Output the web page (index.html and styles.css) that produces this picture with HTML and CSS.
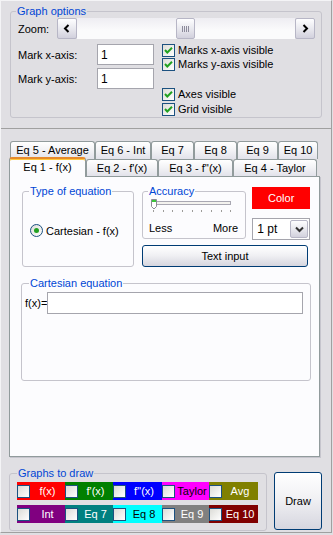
FILE: index.html
```html
<!DOCTYPE html>
<html lang="en">
<head>
    <meta charset="UTF-8">
    <title>Graph options</title>
    <link rel="stylesheet" href="styles.css">
</head>
<body>

<div class="app">
    <!-- Graph options panel -->
    <div class="top">
        <fieldset class="group options">
            <legend>Graph options</legend>
            <div class="zoom-row">
                <span class="zoom-label">Zoom:</span>
                <div class="hscroll">
                    <span class="sb-btn"><svg width="8" height="9" viewBox="0 0 8 9"><path d="M5.5 1L2 4.5 5.5 8" fill="none" stroke="#000" stroke-width="2"/></svg></span>
                    <span class="sb-track">
                        <span class="sb-thumb"><svg width="8" height="6" viewBox="0 0 8 6"><path d="M.5 0v6M2.5 0v6M4.5 0v6M6.5 0v6" stroke="#8d8c9c" stroke-width="1"/></svg></span>
                    </span>
                    <span class="sb-btn"><svg width="8" height="9" viewBox="0 0 8 9"><path d="M2.5 1L6 4.5 2.5 8" fill="none" stroke="#000" stroke-width="2"/></svg></span>
                </div>
            </div>
            <div class="opts">
                <div class="marks">
                    <label class="field"><span class="field-label">Mark x-axis:</span><input class="textbox" type="text" value="1"></label>
                    <label class="field"><span class="field-label">Mark y-axis:</span><input class="textbox" type="text" value="1"></label>
                </div>
                <div class="checks">
                    <div class="check"><span class="box"><svg width="11" height="11" viewBox="0 0 11 11"><path d="M2 5l2.3 2.5L9 2.8" fill="none" stroke="#21a121" stroke-width="2"/></svg></span>Marks x-axis visible</div>
                    <div class="check"><span class="box"><svg width="11" height="11" viewBox="0 0 11 11"><path d="M2 5l2.3 2.5L9 2.8" fill="none" stroke="#21a121" stroke-width="2"/></svg></span>Marks y-axis visible</div>
                    <div class="check spaced"><span class="box"><svg width="11" height="11" viewBox="0 0 11 11"><path d="M2 5l2.3 2.5L9 2.8" fill="none" stroke="#21a121" stroke-width="2"/></svg></span>Axes visible</div>
                    <div class="check tight"><span class="box"><svg width="11" height="11" viewBox="0 0 11 11"><path d="M2 5l2.3 2.5L9 2.8" fill="none" stroke="#21a121" stroke-width="2"/></svg></span>Grid visible</div>
                </div>
            </div>
        </fieldset>
    </div>

    <!-- Equations and graphs -->
    <div class="bottom">
        <div class="tabs">
            <div class="tab-row back">
                <span class="tab" style="width:85px">Eq 5 - Average</span>
                <span class="tab" style="width:56px">Eq 6 - Int</span>
                <span class="tab" style="width:43px">Eq 7</span>
                <span class="tab" style="width:43px">Eq 8</span>
                <span class="tab" style="width:41px">Eq 9</span>
                <span class="tab" style="width:40px">Eq 10</span>
            </div>
            <div class="tab-row front">
                <span class="tab active" style="width:77px">Eq 1 - f(x)</span>
                <span class="tab" style="width:72px">Eq 2 - f'(x)</span>
                <span class="tab" style="width:75px">Eq 3 - f''(x)</span>
                <span class="tab" style="width:84px">Eq 4 - Taylor</span>
            </div>
            <div class="pane">
                <div class="eq-top">
                    <fieldset class="group type-group">
                        <legend>Type of equation</legend>
                        <div class="radio">
                            <svg width="13" height="13" viewBox="0 0 13 13">
                                <defs><linearGradient id="rg" x1="0" y1="0" x2="1" y2="1"><stop offset="0" stop-color="#dcdcd7"/><stop offset="1" stop-color="#fff"/></linearGradient></defs>
                                <circle cx="6.5" cy="6.5" r="6" fill="url(#rg)" stroke="#1c5180"/>
                                <circle cx="6.5" cy="6.5" r="2.5" fill="#21a121"/>
                            </svg>
                            Cartesian - f(x)
                        </div>
                    </fieldset>
                    <div class="eq-side">
                        <div class="side-top">
                            <fieldset class="group acc-group">
                                <legend>Accuracy</legend>
                                <svg class="slider" width="90" height="16" viewBox="0 0 90 16">
                                    <rect x="4.5" y="3.5" width="77" height="3" fill="#f3f2ee" stroke="#a9a8b2"/>
                                    <path d="M4.5 12v2M14.5 12v2M23.5 12v2M33.5 12v2M43.5 12v2M52.5 12v2M62.5 12v2M72.5 12v2M81.5 12v2" stroke="#9d9c99"/>
                                    <path d="M2.5 1.5h5v7l-2.5 2.5-2.5-2.5z" fill="#fff" stroke="#8b8a96"/>
                                    <rect x="3" y="2" width="4" height="2" fill="#3bc43b"/>
                                </svg>
                                <div class="acc-labels"><span>Less</span><span>More</span></div>
                            </fieldset>
                            <div class="side-col">
                                <div class="color-btn">Color</div>
                                <div class="combo">
                                    <span class="combo-text">1 pt</span>
                                    <span class="combo-btn"><svg width="9" height="7" viewBox="0 0 9 7"><path d="M1 1.5l3.5 3.5L8 1.5" fill="none" stroke="#333" stroke-width="2"/></svg></span>
                                </div>
                            </div>
                        </div>
                        <div class="xp-btn text-btn">Text input</div>
                    </div>
                </div>
                <fieldset class="group cart-group">
                    <legend>Cartesian equation</legend>
                    <div class="eq-row">
                        <span class="eq-label">f(x)=</span>
                        <input class="textbox eq-input" type="text" value="">
                    </div>
                </fieldset>
            </div>
        </div>

        <div class="draw-row">
            <fieldset class="group graphs-group">
                <legend>Graphs to draw</legend>
                <div class="swatches">
                    <div class="swatch c-red"><span class="box"></span><span class="swatch-text">f(x)</span></div>
                    <div class="swatch c-green"><span class="box"></span><span class="swatch-text">f'(x)</span></div>
                    <div class="swatch c-blue"><span class="box"></span><span class="swatch-text">f''(x)</span></div>
                    <div class="swatch c-magenta dark"><span class="box"></span><span class="swatch-text">Taylor</span></div>
                    <div class="swatch c-olive"><span class="box"></span><span class="swatch-text">Avg</span></div>
                    <div class="swatch c-purple"><span class="box"></span><span class="swatch-text">Int</span></div>
                    <div class="swatch c-teal"><span class="box"></span><span class="swatch-text">Eq 7</span></div>
                    <div class="swatch c-cyan dark"><span class="box"></span><span class="swatch-text">Eq 8</span></div>
                    <div class="swatch c-gray"><span class="box"></span><span class="swatch-text">Eq 9</span></div>
                    <div class="swatch c-maroon"><span class="box"></span><span class="swatch-text">Eq 10</span></div>
                </div>
            </fieldset>
            <div class="xp-btn draw-btn">Draw</div>
        </div>
    </div>
</div>

</body>
</html>
```

FILE: styles.css
```css
/* Global styles */
* {
    box-sizing: border-box;
}
body {
    margin: 0;
    background-color: #e0dfe3;
    font-family: "Liberation Sans", Arial, sans-serif;
    font-size: 11px;
    color: #000;
}
.app {
    width: 332px;
    height: 533px;
    border-top: 1px solid #f4f4f6;
    border-left: 1px solid #f4f4f6;
    border-right: 1px solid #a0a0a0;
    border-bottom: 1px solid #a0a0a0;
}

/* Group boxes */
.group {
    margin: 0;
    padding: 0;
    min-width: 0;
    border: 1px solid #c5c4cc;
    border-radius: 3px;
}
.group legend {
    padding: 0 1px;
    line-height: 13px;
    color: #0046d5;
}

/* Common controls */
.box {
    display: flex;
    align-items: center;
    justify-content: center;
    flex: none;
    width: 13px;
    height: 13px;
    border: 1px solid #1c5180;
    background: linear-gradient(135deg, #dcdcd7, #ffffff);
}
.textbox {
    margin: 0;
    padding: 0 3px;
    border: 1px solid #a5a5ad;
    background: #fff;
    font-family: inherit;
    font-size: 12px;
    color: #000;
    outline: none;
}
.xp-btn {
    border: 1px solid #003c74;
    border-radius: 3px;
    background: linear-gradient(#ffffff, #f1f1f4 45%, #d6d6df);
    text-align: center;
}

/* Top panel */
.top {
    height: 124px;
    border-bottom: 1px solid #a0a0a0;
}
.options {
    margin: 4px 0 0 9px;
    width: 312px;
    height: 113px;
}
.options legend {
    margin-left: 5px;
}
.zoom-row {
    display: flex;
    align-items: center;
    height: 21px;
    margin-left: 7px;
}
.zoom-label {
    width: 39px;
}
.hscroll {
    display: flex;
    width: 258px;
    height: 21px;
}
.sb-btn, .sb-thumb {
    display: flex;
    align-items: center;
    justify-content: center;
    width: 20px;
    border: 1px solid #b7b6c6;
    border-radius: 2px;
    background: linear-gradient(#fefeff, #e9e9ef 50%, #d2d1dd);
}
.sb-track {
    display: flex;
    flex: 1;
    background: linear-gradient(#eeedf2, #fbfbfc 60%);
}
.sb-thumb {
    width: 19px;
    margin-left: 99px;
}
.opts {
    display: flex;
    margin: 4px 0 0 7px;
}
.marks {
    width: 144px;
}
.field {
    display: flex;
    align-items: center;
    margin-top: 1px;
}
.field + .field {
    margin-top: 3px;
}
.field-label {
    width: 79px;
}
.field .textbox {
    width: 57px;
    height: 21px;
}
.check {
    display: flex;
    align-items: center;
    gap: 3px;
    height: 14px;
}
.check.spaced {
    margin-top: 16px;
}
.check.tight {
    margin-top: 1px;
}

/* Tabs */
.bottom {
    padding-top: 12px;
}
.tabs {
    margin-left: 8px;
}
.tab-row {
    display: flex;
}
.tab-row.back {
    margin-left: 1px;
    height: 18px;
}
.tab {
    flex: none;
    height: 18px;
    border: 1px solid #919b9c;
    border-bottom: 0;
    border-radius: 3px 3px 0 0;
    background: linear-gradient(#ffffff, #f2f2f5 50%, #e2e2ea);
    text-align: center;
    line-height: 16px;
    white-space: nowrap;
}
.tab-row.front {
    height: 19px;
    margin-top: -2px;
    align-items: flex-end;
}
.front .tab {
    height: 17px;
}
.front .tab.active {
    position: relative;
    z-index: 1;
    height: 20px;
    margin-bottom: -1px;
    border-top: 2px solid #e68b2c;
    background: #fcfcfe;
    box-shadow: inset 0 1px #ffc83c;
    line-height: 17px;
}
.pane {
    width: 311px;
    height: 281px;
    padding: 8px 0 0 12px;
    border: 1px solid #919b9c;
    background: #fcfcfe;
    box-shadow: 1px 1px 0 #c6c5cd;
}
.eq-top {
    display: flex;
    align-items: flex-start;
}
.type-group {
    width: 112px;
    height: 82px;
}
.type-group legend {
    margin-left: 6px;
}
.radio {
    display: flex;
    align-items: center;
    gap: 3px;
    margin: 26px 0 0 7px;
    height: 13px;
}
.eq-side {
    width: 168px;
    margin-left: 8px;
}
.side-top {
    display: flex;
    align-items: flex-start;
}
.acc-group {
    width: 105px;
    height: 54px;
}
.acc-group legend {
    margin-left: 5px;
}
.slider {
    display: block;
    margin-left: 6px;
}
.acc-labels {
    display: flex;
    justify-content: space-between;
    width: 89px;
    margin: 8px 0 0 6px;
    line-height: 13px;
}
.side-col {
    width: 58px;
    margin-left: 6px;
}
.color-btn {
    margin-top: 2px;
    height: 22px;
    background-color: #ff0000;
    color: #fff;
    text-align: center;
    line-height: 22px;
}
.combo {
    display: flex;
    align-items: center;
    justify-content: space-between;
    margin-top: 9px;
    height: 22px;
    padding: 0 1px 0 4px;
    border: 1px solid #a5a5ad;
    background: #fff;
    font-size: 12px;
}
.combo-btn {
    display: flex;
    align-items: center;
    justify-content: center;
    width: 18px;
    height: 18px;
    border: 1px solid #b7b6c6;
    border-radius: 2px;
    background: linear-gradient(#fefeff, #e9e9ef 50%, #d2d1dd);
}
.text-btn {
    margin-top: 5px;
    width: 166px;
    height: 22px;
    line-height: 20px;
}
.cart-group {
    margin: 10px 0 0 -1px;
    width: 290px;
    height: 104px;
}
.cart-group legend {
    margin-left: 7px;
}
.eq-row {
    display: flex;
    align-items: center;
    margin: 2px 0 0 3px;
}
.eq-label {
    width: 22px;
}
.eq-input {
    width: 256px;
    height: 22px;
}

/* Graphs to draw */
.draw-row {
    display: flex;
    align-items: flex-start;
    margin: 10px 0 0 8px;
}
.graphs-group {
    width: 258px;
    height: 64px;
}
.graphs-group legend {
    margin-left: 7px;
}
.swatches {
    display: grid;
    grid-template-columns: 48px 48px 49px 47px 49px;
    row-gap: 5px;
    margin: 2px 0 0 7px;
}
.swatch {
    display: flex;
    align-items: center;
    height: 18px;
    color: #fff;
    overflow: hidden;
}
.swatch.dark {
    color: #000;
}
.swatch-text {
    flex: 1;
    text-align: center;
    white-space: nowrap;
}
.c-red { background-color: #ff0000; }
.c-green { background-color: #008000; }
.c-blue { background-color: #0000ff; }
.c-magenta { background-color: #ff00ff; }
.c-olive { background-color: #808000; }
.c-purple { background-color: #800080; }
.c-teal { background-color: #008080; }
.c-cyan { background-color: #00ffff; }
.c-gray { background-color: #808080; }
.c-maroon { background-color: #800000; }
.draw-btn {
    margin: 5px 0 0 7px;
    width: 48px;
    height: 58px;
    line-height: 56px;
}
```
